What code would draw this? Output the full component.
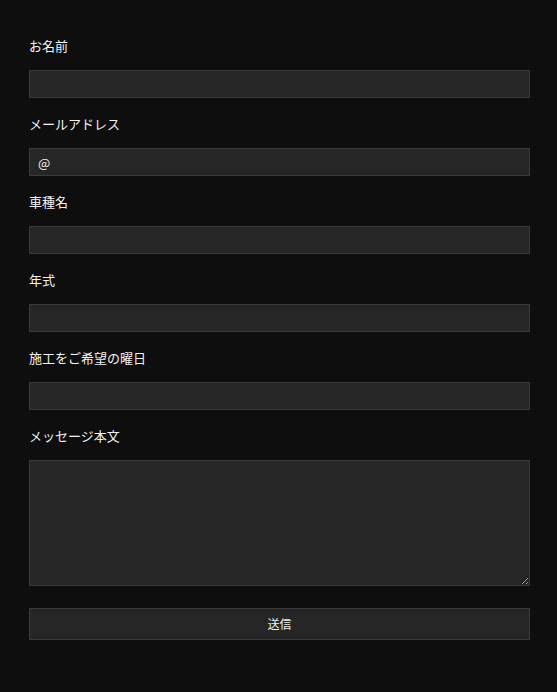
import React from "react";

const font = { fontFamily: '"Noto Sans CJK JP", "Noto Sans", sans-serif' };

function Field({ label, children, first }: { label: string; children: React.ReactNode; first?: boolean }) {
  return (
    <div className={first ? "" : "mt-[16px]"}>
      <label className="block text-[13px] leading-[19px] text-[#f2f2f2]">{label}</label>
      <div className="mt-[15px]">{children}</div>
    </div>
  );
}

const inputCls =
  "block w-full h-[28px] bg-[#262626] border border-[#3a3a3a] px-[8px] text-[13px] text-[#f2f2f2] outline-none";

export default function App() {
  return (
    <div className="min-h-[692px] w-full bg-[#0e0e0e]" style={font}>
      <form className="px-[29px] pt-[36px] w-[559px]" onSubmit={(e) => e.preventDefault()}>
        <Field label="お名前" first>
          <input className={inputCls} />
        </Field>
        <Field label="メールアドレス">
          <input className={inputCls} defaultValue="@" />
        </Field>
        <Field label="車種名">
          <input className={inputCls} />
        </Field>
        <Field label="年式">
          <input className={inputCls} />
        </Field>
        <Field label="施工をご希望の曜日">
          <input className={inputCls} />
        </Field>
        <Field label="メッセージ本文">
          <textarea className="block w-full h-[126px] bg-[#262626] border border-[#3a3a3a] p-[8px] text-[13px] text-[#f2f2f2] outline-none" />
        </Field>
        <button
          type="submit"
          className="mt-[22px] block w-full h-[32px] bg-[#262626] border border-[#3a3a3a] text-[12px] text-[#f2f2f2]"
        >
          送信
        </button>
      </form>
    </div>
  );
}
